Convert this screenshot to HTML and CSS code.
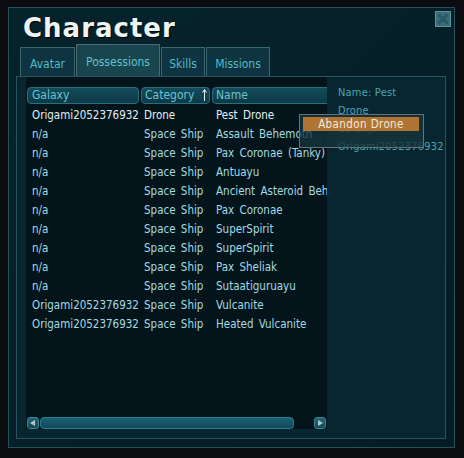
FILE: index.html
```
<!DOCTYPE html>
<html>
<head>
<meta charset="utf-8">
<link rel="stylesheet" href="styles.css">
</head>
<body>
<div class="window">
  <div class="close">
    <svg width="16" height="16" viewBox="0 0 16 16"><rect x="0.5" y="0.5" width="15" height="15" fill="#3a6c79" stroke="#5f929e"/><path d="M3.5 3.5 L12.5 12.5 M12.5 3.5 L3.5 12.5" stroke="#2b5865" stroke-width="3"/></svg>
  </div>
  <h1 class="title">Character</h1>
  <div class="tabs">
    <div class="tab tab-avatar">Avatar</div>
    <div class="tab tab-poss active">Possessions</div>
    <div class="tab tab-skills">Skills</div>
    <div class="tab tab-missions">Missions</div>
  </div>
  <div class="panel">
    <div class="table-area">
      <div class="thead">
        <div class="th th-galaxy">Galaxy</div>
        <div class="th th-cat">Category
          <svg class="sort" width="5" height="12" viewBox="0 0 5 12"><path d="M2.5 1 L2.5 12" stroke="#e8f4f6" stroke-width="1"/><path d="M0.5 3.5 L2.5 0.5 L4.5 3.5" fill="none" stroke="#e8f4f6" stroke-width="1"/></svg>
        </div>
        <div class="th th-name">Name</div>
      </div>
      <div class="rows">
        <div class="row first"><span class="c1">Origami2052376932</span><span class="c2">Drone</span><span class="c3">Pest Drone</span></div>
        <div class="row"><span class="c1">n/a</span><span class="c2">Space Ship</span><span class="c3">Assault Behemoth</span></div>
        <div class="row"><span class="c1">n/a</span><span class="c2">Space Ship</span><span class="c3">Pax Coronae (Tanky)</span></div>
        <div class="row"><span class="c1">n/a</span><span class="c2">Space Ship</span><span class="c3">Antuayu</span></div>
        <div class="row"><span class="c1">n/a</span><span class="c2">Space Ship</span><span class="c3">Ancient Asteroid Behemoth</span></div>
        <div class="row"><span class="c1">n/a</span><span class="c2">Space Ship</span><span class="c3">Pax Coronae</span></div>
        <div class="row"><span class="c1">n/a</span><span class="c2">Space Ship</span><span class="c3">SuperSpirit</span></div>
        <div class="row"><span class="c1">n/a</span><span class="c2">Space Ship</span><span class="c3">SuperSpirit</span></div>
        <div class="row"><span class="c1">n/a</span><span class="c2">Space Ship</span><span class="c3">Pax Sheliak</span></div>
        <div class="row"><span class="c1">n/a</span><span class="c2">Space Ship</span><span class="c3">Sutaatiguruayu</span></div>
        <div class="row"><span class="c1">Origami2052376932</span><span class="c2">Space Ship</span><span class="c3">Vulcanite</span></div>
        <div class="row"><span class="c1">Origami2052376932</span><span class="c2">Space Ship</span><span class="c3">Heated Vulcanite</span></div>
      </div>
      <div class="hscroll">
        <div class="sbtn">
          <svg width="12" height="12" viewBox="0 0 12 12"><path d="M3 6 L8 3 L8 9 Z" fill="#b9c3c6"/></svg>
        </div>
        <div class="thumb"></div>
        <div class="sbtn sbtn-right">
          <svg width="12" height="12" viewBox="0 0 12 12"><path d="M9 6 L4 3 L4 9 Z" fill="#b9c3c6"/></svg>
        </div>
      </div>
    </div>
    <div class="details">
      <div class="dline">Name: Pest Drone</div>
      <div class="dline">Galaxy: Origami2052376932</div>
    </div>
    <div class="menu">
      <div class="menu-item">Abandon Drone</div>
    </div>
  </div>
</div>
</body>
</html>
```

FILE: styles.css
```
html, body {
  margin: 0;
  padding: 0;
  background: #0a0c0f;
  font-family: "DejaVu Sans Condensed", "DejaVu Sans", sans-serif;
  font-stretch: condensed;
  font-size: 11px;
}

.window {
  position: relative;
  box-sizing: border-box;
  margin: 7px 0 0 8px;
  width: 447px;
  height: 441px;
  border: 1px solid #25505c;
  background: linear-gradient(135deg, #06232c 0%, #041c24 100%);
  padding: 0 8px 0 7px;
}

.close {
  position: absolute;
  top: 3px;
  right: 3px;
  width: 16px;
  height: 16px;
}
.close svg { display: block; }

.title {
  margin: 6px 0 0 7px;
  font-family: "DejaVu Sans", sans-serif;
  font-stretch: normal;
  font-weight: bold;
  font-size: 26px;
  line-height: 28px;
  letter-spacing: 1px;
  color: #eef4f4;
  text-shadow: 1px 1px 1px #000;
}

.tabs {
  display: flex;
  align-items: flex-end;
  height: 34px;
  margin-left: 4px;
  gap: 1px;
}

.tab {
  box-sizing: border-box;
  height: 29px;
  border: 1px solid #3c6670;
  border-bottom: none;
  background: #0d3440;
  color: #55bbc5;
  font-size: 12px;
  display: flex;
  align-items: center;
  justify-content: center;
  padding-top: 3px;
}
.tab-avatar { width: 55px; }
.tab-poss { width: 84px; }
.tab-skills { width: 44px; }
.tab-missions { width: 64px; }
.tab.active {
  height: 32px;
  background: #1a444e;
  border-color: #4c6a70;
  color: #5ec3cb;
  padding-top: 2px;
}

.panel {
  position: relative;
  box-sizing: border-box;
  height: 363px;
  border: 1px solid #28545f;
  background: #08262f;
  display: flex;
  padding: 0 0 9px 9px;
}

.table-area {
  box-sizing: border-box;
  width: 301px;
  flex: none;
  background: #03151b;
  padding: 10px 0 0 1px;
  display: flex;
  flex-direction: column;
  overflow: hidden;
}

.thead, .row {
  display: grid;
  grid-template-columns: 112px 69px 240px;
  column-gap: 2px;
  white-space: nowrap;
}

.th {
  position: relative;
  box-sizing: border-box;
  height: 17px;
  line-height: 15px;
  border: 1px solid #2a6f7e;
  border-radius: 4px;
  background: linear-gradient(#134c5a, #0c3946);
  color: #68c2d0;
  font-size: 12px;
  padding-left: 4px;
}
.th-cat { padding-left: 3px; }
.th-name { padding-left: 3px; }
.sort {
  position: absolute;
  right: 2px;
  top: 1px;
}

.rows {
  margin-top: 2px;
}
.row {
  height: 19px;
  line-height: 19px;
  font-size: 11.5px;
  color: #a4dae2;
  word-spacing: 2px;
}
.row.first { color: #e2f0f2; }
.c1 { padding-left: 5px; }
.c2 { padding-left: 3px; }
.c3 { padding-left: 4px; }

.hscroll {
  margin-top: auto;
  display: flex;
  height: 12px;
}
.sbtn {
  box-sizing: border-box;
  width: 12px;
  height: 12px;
  border: 1px solid #3a8494;
  border-radius: 3px;
  background: linear-gradient(#1f6474, #124a58);
  flex: none;
}
.sbtn svg { display: block; margin: -1px; }
.sbtn-right { margin-left: 20px; }
.thumb {
  box-sizing: border-box;
  margin-left: 1px;
  width: 254px;
  height: 12px;
  border: 1px solid #2b7c8e;
  border-radius: 4px;
  background: linear-gradient(#1b6277, #0f4759);
  flex: none;
}

.details {
  box-sizing: border-box;
  padding: 7px 0 0 11px;
  width: 110px;
  color: #47a6b3;
  line-height: 18px;
  font-size: 11px;
  letter-spacing: 0.2px;
}
.dline { width: 80px; }

.menu {
  position: absolute;
  left: 282px;
  top: 37px;
  box-sizing: border-box;
  width: 125px;
  height: 34px;
  border: 1px solid #687276;
  background: rgba(22, 52, 60, 0.78);
  padding: 2px 4px 0 3px;
}
.menu-item {
  height: 14px;
  line-height: 14px;
  background: #b07434;
  color: #f2e8de;
  font-size: 11.5px;
  text-align: center;
  letter-spacing: 0.4px;
}
```
